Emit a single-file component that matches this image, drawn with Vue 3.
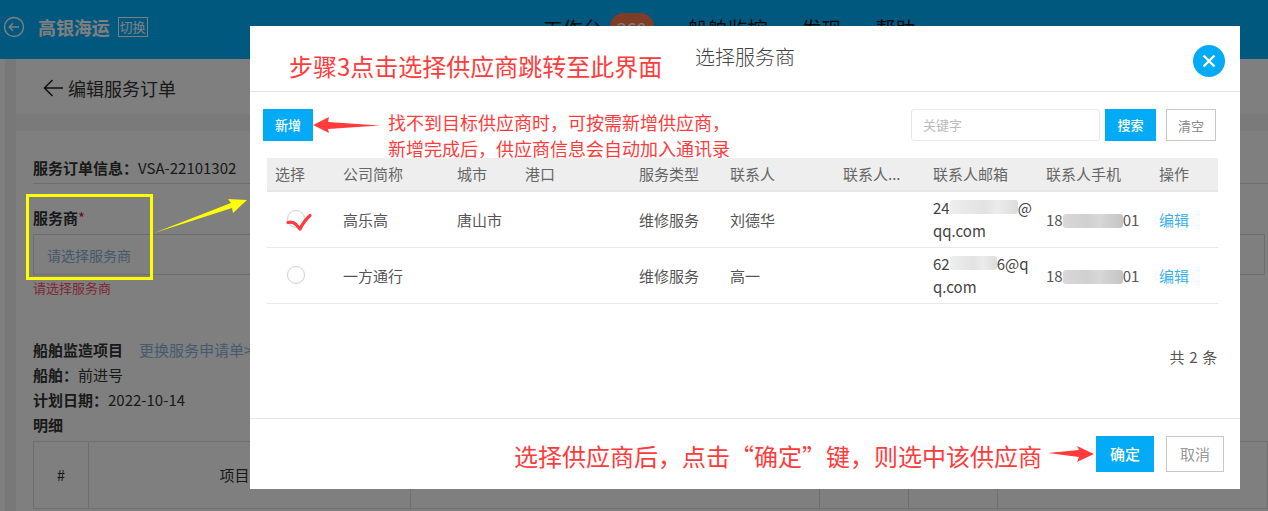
<template>
  <div class="page">
    <header class="topbar">
      <svg class="back-circle" width="22" height="22" viewBox="0 0 22 22">
        <circle cx="11" cy="11" r="9.5" fill="none" stroke="#fff" stroke-width="1.4" />
        <path d="M16 11H6.5M10 7.2L6.2 11l3.8 3.8" fill="none" stroke="#fff" stroke-width="1.4" />
      </svg>
      <span class="brand">高银海运</span>
      <span class="switch">切换</span>
      <nav class="nav">
        <span class="nav-item">工作台<em class="badge">260</em></span>
        <span class="nav-item">船舶监控</span>
        <span class="nav-item">发现</span>
        <span class="nav-item">帮助</span>
      </nav>
    </header>

    <div class="workspace">
      <div class="rail"></div>
      <main class="main">
        <div class="title-card">
          <svg width="20" height="18" viewBox="0 0 20 18">
            <path d="M20 9H1.5M9.5 1L1.5 9l8 8" fill="none" stroke="#222" stroke-width="1.5" />
          </svg>
          <span>编辑服务订单</span>
        </div>
        <div class="form-card">
          <div class="order-line"><b>服务订单信息：</b>VSA-22101302</div>
          <div class="field-label"><b>服务商</b><i>*</i></div>
          <div class="select-box">请选择服务商</div>
          <div class="field-error">请选择服务商</div>
          <div class="ship-head"><b>船舶监造项目</b><a>更换服务申请单&gt;</a></div>
          <div class="ship-line"><b>船舶：</b>前进号</div>
          <div class="ship-line"><b>计划日期：</b>2022-10-14</div>
          <div class="ship-line"><b>明细</b></div>
          <div class="detail-table">
            <div class="dc dc-no">#</div>
            <div class="dc dc-name">项目名称</div>
            <div class="dc dc-a"></div>
            <div class="dc dc-b"></div>
            <div class="dc dc-c"></div>
            <div class="dc dc-d"></div>
          </div>
        </div>
      </main>
    </div>

    <div class="mask"></div>

    <section class="dialog">
      <div class="dialog-head">
        <span class="dialog-title">选择服务商</span>
        <button class="close">
          <svg width="16" height="16" viewBox="0 0 16 16">
            <path d="M2.500 2.500l11 11M13.500 2.500l-11 11" stroke="#fff" stroke-width="2.400" />
          </svg>
        </button>
      </div>
      <div class="dialog-body">
        <div class="toolbar">
          <button class="btn btn-primary btn-add">新增</button>
          <div class="search">
            <div class="keyword">关键字</div>
            <button class="btn btn-primary btn-search">搜索</button>
            <button class="btn btn-plain">清空</button>
          </div>
        </div>
        <table class="grid">
          <colgroup>
            <col v-for="w in colWidths" :key="w.id" :style="{ width: w.px + 'px' }" />
          </colgroup>
          <thead>
            <tr>
              <th v-for="h in headers" :key="h">{{ h }}</th>
            </tr>
          </thead>
          <tbody>
            <tr v-for="row in rows" :key="row.name">
              <td class="radio-cell"><span class="radio"></span></td>
              <td>{{ row.name }}</td>
              <td>{{ row.city }}</td>
              <td></td>
              <td>维修服务</td>
              <td>{{ row.contact }}</td>
              <td></td>
              <td class="mail">
                {{ row.mailStart }}<span class="smudge smudge-light" :style="{ width: row.blur + 'px' }"></span>{{ row.mailEnd }}<br />{{ row.mailNext }}
              </td>
              <td>18<span class="smudge" style="width: 60px"></span>01</td>
              <td><a class="edit">编辑</a></td>
            </tr>
          </tbody>
        </table>
        <div class="total">共 2 条</div>
      </div>
      <div class="dialog-foot">
        <button class="btn btn-primary btn-foot">确定</button>
        <button class="btn btn-plain btn-foot btn-cancel">取消</button>
      </div>
    </section>

    <!-- annotations pasted over the screenshot -->
    <div class="note note-title">步骤3点击选择供应商跳转至此界面</div>
    <div class="note note-add">找不到目标供应商时，可按需新增供应商，<br />新增完成后，供应商信息会自动加入通讯录</div>
    <div class="note note-foot">选择供应商后，点击“确定”键，则选中该供应商</div>
    <div class="yellow-box"></div>
    <svg class="arrows" width="1268" height="511" viewBox="0 0 1268 511">
      <polygon points="313,125 329,117 328,122 380,125.5 328,129 329,133" fill="#ff3b3b" />
      <polygon points="1048,453 1079,450 1077,446 1094,454 1077,462 1079,457" fill="#ff3b3b" />
      <polygon points="154,233 231,203 228,199 247,200 233,213 232,208" fill="#ffff00" />
      <path d="M288 222.5c3-1 6 0 8 2l4 4.500c3-6 6-10 10-13.500" fill="none" stroke="#ff3b3b" stroke-width="3.200" stroke-linecap="round" stroke-linejoin="round" />
    </svg>
  </div>
</template>

<script setup>
const colWidths = [68, 114, 68, 114, 91, 113, 90, 113, 113, 67].map((px, id) => ({ id, px }))

const headers = ['选择', '公司简称', '城市', '港口', '服务类型', '联系人', '联系人...', '联系人邮箱', '联系人手机', '操作']

const rows = [
  { name: '高乐高', city: '唐山市', contact: '刘德华', mailStart: '24', blur: 68, mailEnd: '@', mailNext: 'qq.com' },
  { name: '一方通行', city: '', contact: '高一', mailStart: '62', blur: 47, mailEnd: '6@q', mailNext: 'q.com' },
]
</script>

<style>
html,
body {
  margin: 0;
  overflow: hidden;
}
</style>

<style scoped>
.page {
  position: relative;
  width: 1268px;
  height: 511px;
  overflow: hidden;
  background: #f4f4f4;
  font-family: "Noto Sans CJK SC", "Open Sans", sans-serif;
  font-size: 15px;
  color: #333;
}

/* page under the mask */
.topbar {
  display: flex;
  align-items: center;
  height: 59px;
  padding: 0 0 6px 3px;
  box-sizing: border-box;
  background: #02b0fe;
  color: #fff;
}
.back-circle {
  margin-right: 13px;
}
.brand {
  font-size: 18px;
  font-weight: 700;
  letter-spacing: -0.1px;
}
.switch {
  margin-left: 8px;
  padding: 0 1px;
  height: 18px;
  line-height: 17px;
  border: 1px solid #fff;
  font-size: 13px;
}
.nav {
  display: flex;
  gap: 34px;
  margin-left: 395px;
  font-size: 20px;
  color: #111;
  padding-top: 3px;
}
.nav-item {
  display: flex;
  align-items: center;
  white-space: nowrap;
}
.badge {
  margin-left: 7px;
  padding: 0 7px;
  border-radius: 14px;
  background: #ff7a50;
  color: #fff;
  font-style: normal;
  font-size: 18px;
  line-height: 30px;
}
.workspace {
  display: flex;
}
.rail {
  width: 16px;
  height: 452px;
  background: #f0f0f0;
  border-left: 5px solid #fff;
  box-sizing: border-box;
}
.main {
  flex: 1;
}
.title-card {
  display: flex;
  align-items: center;
  gap: 5px;
  height: 55px;
  padding: 2px 0 0 27px;
  box-sizing: border-box;
  background: #fff;
  font-size: 18px;
  color: #333;
}
.form-card {
  margin-top: 17px;
  height: 400px;
  padding: 27px 0 0 17px;
  box-sizing: border-box;
  background: #fff;
  line-height: 20px;
}
.order-line {
  height: 25px;
  border-bottom: 1px solid #ddd;
}
.field-label {
  margin-top: 24px;
}
.field-label i {
  color: #e02020;
  font-style: normal;
}
.select-box {
  margin-top: 6px;
  height: 41px;
  padding-left: 13px;
  font-size: 14px;
  line-height: 41px;
  border: 1px solid #ddd;
  box-sizing: border-box;
  margin-right: 3px;
  color: #8ab0dc;
}
.field-error {
  margin-top: 3px;
  font-size: 13px;
  color: #ff5068;
}
.ship-head {
  margin-top: 42px;
}
.ship-head a {
  margin-left: 16px;
  color: #8ab4e0;
}
.ship-line {
  margin-top: 5px;
}
.detail-table {
  display: flex;
  height: 68px;
  margin-top: 6px;
  border: 1px solid #ddd;
  box-sizing: border-box;
  line-height: 66px;
  text-align: center;
}
.dc {
  border-right: 1px solid #ddd;
  box-sizing: border-box;
}
.dc-no {
  width: 55px;
}
.dc-name {
  width: 322px;
}
.dc-a {
  width: 409px;
}
.dc-b,
.dc-c {
  width: 89px;
}
.dc-d {
  flex: 1;
  border-right: 0;
}
.mask {
  position: absolute;
  inset: 0;
  background: rgba(0, 0, 0, 0.5);
}

/* dialog */
.dialog {
  position: absolute;
  left: 250px;
  top: 26px;
  display: flex;
  flex-direction: column;
  width: 990px;
  height: 463px;
  background: #fff;
}
.dialog-head {
  display: flex;
  align-items: center;
  justify-content: space-between;
  height: 66px;
  padding: 4px 15px 0 445px;
  border-bottom: 1px solid #e4e4e4;
  box-sizing: border-box;
}
.dialog-title {
  position: relative;
  top: -4px;
  font-size: 20px;
  font-weight: 300;
  color: #444;
}
.close {
  display: flex;
  align-items: center;
  justify-content: center;
  width: 32px;
  height: 32px;
  padding: 0;
  border: 0;
  border-radius: 50%;
  background: #03aaf6;
}
.dialog-body {
  flex: 1;
  padding: 17px 22px 0 13px;
}
.toolbar {
  display: flex;
  justify-content: space-between;
  height: 32px;
  padding-right: 2px;
}
.search {
  display: flex;
}
.btn {
  height: 32px;
  padding: 0;
  border: 0;
  font-family: inherit;
  font-size: 13px;
  line-height: 32px;
}
.btn-primary {
  background: #03aaf6;
  color: #fff;
  font-weight: 500;
}
.btn-add {
  width: 50px;
}
.btn-search {
  width: 51px;
  margin: 0 10px 0 5px;
}
.btn-plain {
  width: 50px;
  border: 1px solid #c8c8c8;
  background: #fff;
  color: #888;
}
.keyword {
  width: 189px;
  height: 32px;
  padding-left: 11px;
  border: 1px solid #e8e8e8;
  border-radius: 3px;
  box-sizing: border-box;
  font-size: 13px;
  line-height: 30px;
  color: #bbb;
}
.grid {
  width: 951px;
  margin: 17px 0 0 4px;
  border-collapse: collapse;
  table-layout: fixed;
  font-size: 15px;
}
.grid th {
  height: 33px;
  padding: 0 8px 2px;
  background: #eee;
  border-bottom: 2px solid #e4e6e8;
  box-sizing: border-box;
  font-weight: 400;
  text-align: left;
  color: #666;
  white-space: nowrap;
}
.grid td {
  height: 56px;
  padding: 0 8px;
  border-bottom: 1px solid #e8e8e8;
  box-sizing: border-box;
  line-height: 23px;
  color: #555;
  white-space: nowrap;
}
.grid td.mail {
  color: #444;
}
.radio-cell {
  text-align: center;
}
.radio {
  display: block;
  width: 18px;
  height: 18px;
  margin-left: 12px;
  border: 1px solid #ccd0d6;
  border-radius: 50%;
  box-sizing: border-box;
}
.smudge {
  display: inline-block;
  height: 14px;
  vertical-align: -2px;
  border-radius: 3px;
  background: linear-gradient(90deg, #d8d8d8, #d0d0d0 40%, #d8d8d8 60%, #c4c4c4);
  filter: blur(0.7px);
}
.smudge-light {
  background: linear-gradient(90deg, #eee, #e2e2e2 50%, #ececec 70%, #dcdcdc);
  vertical-align: 0;
}
.edit {
  color: #38b0ee;
}
.total {
  margin-top: 43px;
  text-align: right;
  line-height: 20px;
  letter-spacing: 0.7px;
  color: #555;
}
.dialog-foot {
  display: flex;
  justify-content: flex-end;
  gap: 12px;
  height: 71px;
  padding: 17px 16px 0 0;
  border-top: 1px solid #e4e4e4;
  box-sizing: border-box;
}
.btn-foot {
  width: 58px;
  height: 36px;
  font-size: 15px;
  line-height: 34px;
}
.btn-cancel {
  color: #999;
}

/* red notes, yellow frame and arrows */
.note {
  position: absolute;
  color: #ff3b3b;
  white-space: nowrap;
}
.note-title {
  left: 289px;
  top: 48px;
  font-size: 24px;
  line-height: 36px;
}
.note-add {
  left: 388px;
  top: 109px;
  font-size: 18px;
  line-height: 26px;
}
.note-foot {
  left: 514px;
  top: 438px;
  font-size: 24px;
  line-height: 36px;
}
.yellow-box {
  position: absolute;
  left: 26px;
  top: 194px;
  width: 127px;
  height: 86px;
  border: 3px solid #ffff00;
  box-sizing: border-box;
}
.arrows {
  position: absolute;
  left: 0;
  top: 0;
}
</style>
